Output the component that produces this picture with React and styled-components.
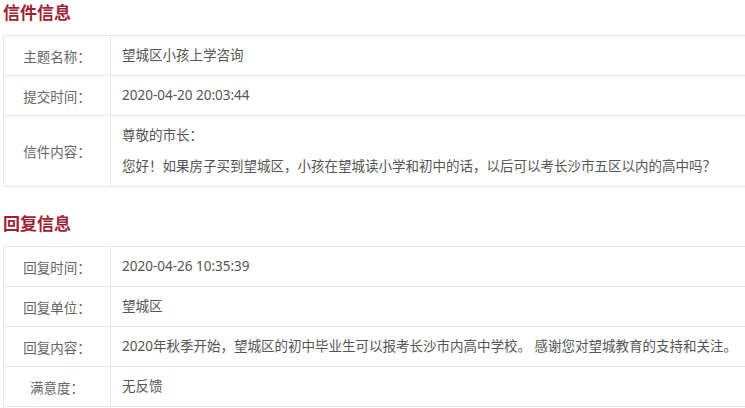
import React from 'react';
import styled, { createGlobalStyle } from 'styled-components';

const GlobalStyle = createGlobalStyle`
  html, body {
    margin: 0;
    padding: 0;
    background: #fff;
    overflow: hidden;
  }
  body {
    font-family: 'Noto Sans', 'Noto Sans CJK SC', sans-serif;
  }
`

const letterRows = [
  { label: '主题名称：', value: ['望城区小孩上学咨询'] },
  { label: '提交时间：', value: ['2020-04-20 20:03:44'] },
  { label: '信件内容：', value: ['尊敬的市长：', '您好！如果房子买到望城区，小孩在望城读小学和初中的话，以后可以考长沙市五区以内的高中吗？'] },
];

const replyRows = [
  { label: '回复时间：', value: ['2020-04-26 10:35:39'] },
  { label: '回复单位：', value: ['望城区'] },
  { label: '回复内容：', value: ['2020年秋季开始，望城区的初中毕业生可以报考长沙市内高中学校。 感谢您对望城教育的支持和关注。'] },
  { label: '满意度：', value: ['无反馈'] },
];

const InfoTable = ({ rows }) => (
  <Table>
    {rows.map((row) => (
      <Row key={row.label}>
        <Label>{row.label}</Label>
        <Value>
          {row.value.map((line) => <Line key={line}>{line}</Line>)}
        </Value>
      </Row>
    ))}
  </Table>
);

export default function App() {
  return (
    <Page>
      <GlobalStyle />
      <Section>
        <Title>信件信息</Title>
        <InfoTable rows={letterRows} />
      </Section>
      <Section spaced>
        <Title>回复信息</Title>
        <InfoTable rows={replyRows} />
      </Section>
    </Page>
  );
}

const Page = styled.div`
  padding-left: 3px;
  width: 742px;
`
const Section = styled.section`
  margin-top: ${props => props.spaced ? '24px' : '0'};
`
const Title = styled.h2`
  margin: 0 0 11px 0;
  font-size: 17px;
  line-height: 24px;
  font-weight: bold;
  color: #a11f36;
  font-family: 'Noto Sans CJK SC', sans-serif;
`
const Table = styled.div`
  border: 1px solid #e8e8e8;
  border-right: none;
  display: flex;
  flex-direction: column;
`
const Row = styled.div`
  display: grid;
  grid-template-columns: 107px 1fr;
  & + & {
    border-top: 1px solid #e8e8e8;
  }
`
const Label = styled.div`
  display: flex;
  align-items: center;
  justify-content: center;
  border-right: 1px solid #e8e8e8;
  font-size: 13.5px;
  color: #666;
`
const Value = styled.div`
  padding: 4px 0 4px 11px;
  font-size: 13.5px;
  color: #555;
  white-space: nowrap;
`
const Line = styled.div`
  line-height: 31px;
`
